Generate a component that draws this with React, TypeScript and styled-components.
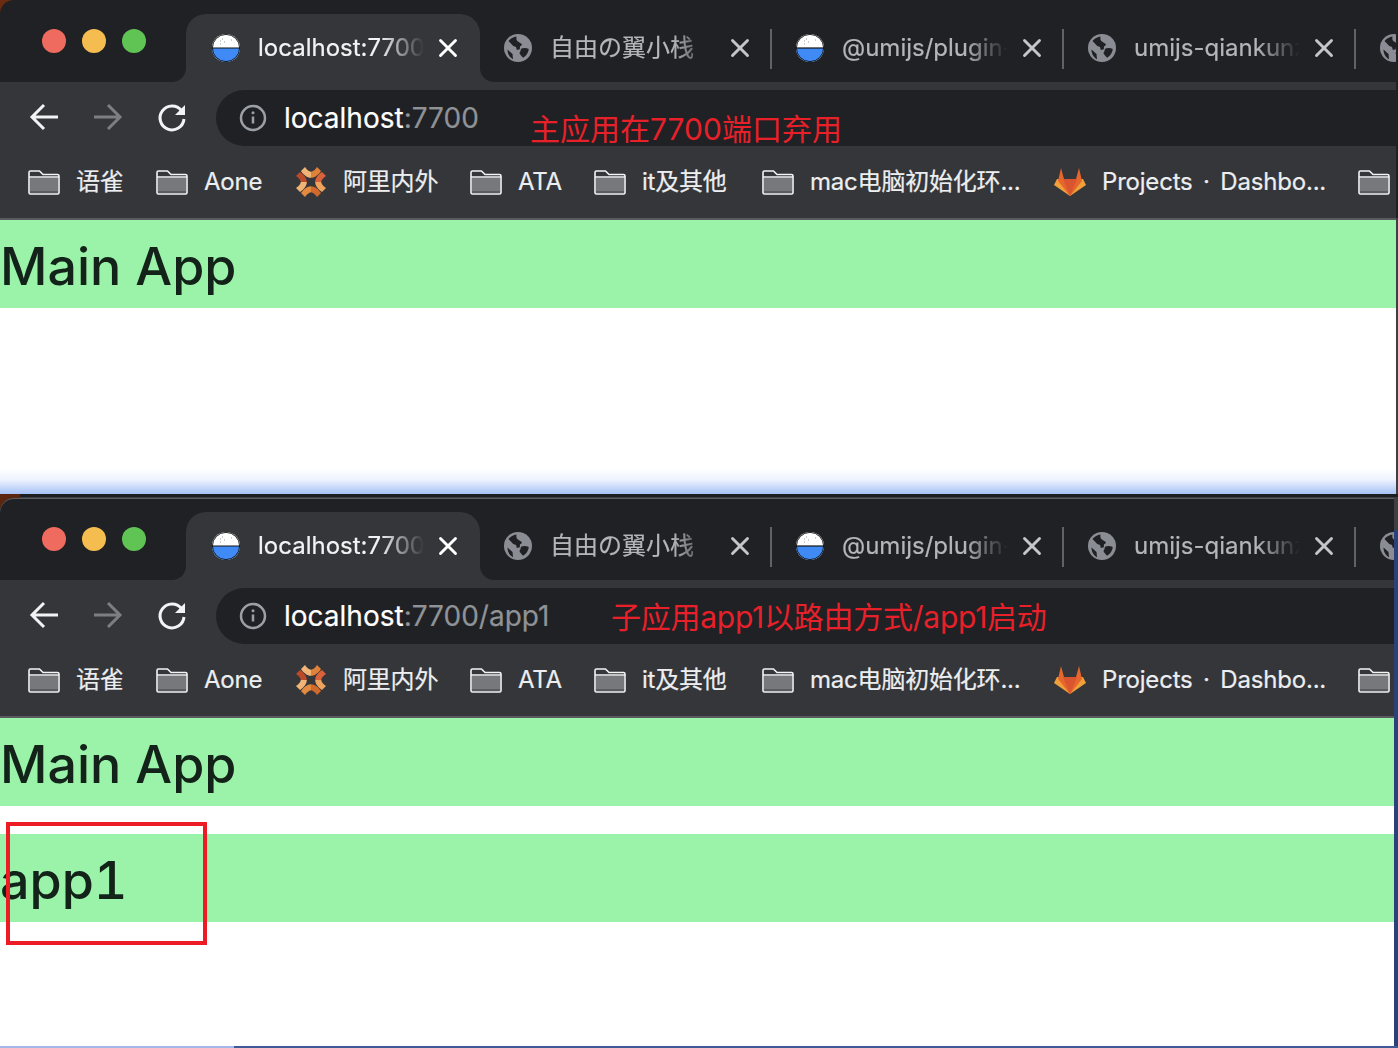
import React from "react";
import styled, { createGlobalStyle } from "styled-components";
import { X } from "lucide-react";

const GlobalStyle = createGlobalStyle`
  html, body {
    margin: 0;
    padding: 0;
    background: #ffffff;
    overflow: hidden;
  }
  * {
    box-sizing: border-box;
  }
  body {
    font-family: Inter, "Noto Sans CJK SC", sans-serif;
  }
`;

const Page = styled.div`
  width: 1398px;
  height: 1048px;
  display: flex;
  flex-direction: column;
  overflow: hidden;
  background: #ffffff;
`;

const Frame = styled.section<{ $height: number; $top: number; $backdrop: string; $edge: number }>`
  height: ${(p) => p.$height}px;
  flex: none;
  display: flex;
  flex-direction: column;
  padding-right: ${(p) => p.$edge}px;
  background: ${(p) => p.$backdrop};
  padding-top: ${(p) => p.$top}px;
`;

const Chrome = styled.div<{ $lined: boolean }>`
  flex: none;
  background: #202124;
  border-top-left-radius: 14px;
  overflow: hidden;
  ${(p) => (p.$lined ? "box-shadow: inset 0 1px 0 #5c5d60;" : "")}
`;

const TabStrip = styled.div`
  height: 82px;
  display: flex;
  align-items: flex-end;
  overflow: hidden;
`;

const Lights = styled.div`
  flex: none;
  width: 186px;
  height: 82px;
  display: flex;
  gap: 16px;
  padding: 29px 0 0 42px;
`;

const Light = styled.span<{ $color: string }>`
  width: 24px;
  height: 24px;
  border-radius: 50%;
  background: ${(p) => p.$color};
`;

const Tab = styled.div<{ $active?: boolean; $width: number }>`
  position: relative;
  flex: none;
  width: ${(p) => p.$width}px;
  height: 68px;
  display: flex;
  align-items: center;
  padding: 0 20px 0 ${(p) => (p.$active ? 26 : 24)}px;
  color: ${(p) => (p.$active ? "#f1f3f4" : "#b4b6b9")};
  background: ${(p) => (p.$active ? "#35363a" : "transparent")};
  border-radius: 20px 20px 0 0;

  ${(p) =>
    p.$active
      ? `
    &::before, &::after {
      content: "";
      position: absolute;
      bottom: 0;
      width: 14px;
      height: 14px;
    }
    &::before {
      left: -14px;
      background: radial-gradient(circle at 0 0, #202124 13.5px, #35363a 14.5px);
    }
    &::after {
      right: -14px;
      background: radial-gradient(circle at 100% 0, #202124 13.5px, #35363a 14.5px);
    }
  `
      : ""}
`;

const TabDivider = styled.span`
  position: absolute;
  right: 0;
  top: 15px;
  width: 2px;
  height: 40px;
  background: #5f6368;
`;

const TabTitle = styled.span`
  flex: 1;
  min-width: 0;
  margin: 0 12px 0 18px;
  font-size: 24px;
  line-height: 32px;
  white-space: nowrap;
  overflow: hidden;
  -webkit-text-stroke: 0.2px currentColor;
  -webkit-mask-image: linear-gradient(to right, #000 74%, transparent 100%);
  mask-image: linear-gradient(to right, #000 74%, transparent 100%);
`;

const TabClose = styled.span`
  flex: none;
  width: 24px;
  height: 24px;
  display: flex;
  align-items: center;
  justify-content: center;
  & svg {
    flex: none;
  }
`;

const Toolbar = styled.div`
  height: 64px;
  display: flex;
  align-items: flex-end;
  background: #35363a;
`;

const NavGroup = styled.div`
  flex: none;
  width: 216px;
  height: 64px;
  display: flex;
  align-items: center;
  padding: 6px 0 0 28px;
  gap: 32px;
`;

const Omnibox = styled.div`
  position: relative;
  flex: 1;
  height: 56px;
  display: flex;
  align-items: center;
  padding-left: 23px;
  background: #202124;
  border-radius: 28px 0 0 28px;
`;

const UrlText = styled.span`
  margin-left: 17px;
  font-size: 28px;
  line-height: 36px;
  color: #ffffff;
  white-space: nowrap;
  -webkit-text-stroke: 0.2px currentColor;
`;

const UrlRest = styled.span`
  color: #8f9296;
`;

const Note = styled.span<{ $left: number; $top: number; $tight?: boolean }>`
  position: absolute;
  left: ${(p) => p.$left}px;
  top: ${(p) => p.$top}px;
  font-size: 30px;
  line-height: 40px;
  color: #e8202a;
  white-space: nowrap;
  letter-spacing: ${(p) => (p.$tight ? "-0.25px" : "0")};
`;

const Bookmarks = styled.div`
  height: 72px;
  display: flex;
  align-items: center;
  padding: 0 0 0 28px;
  background: #35363a;
  overflow: hidden;
`;

const Bookmark = styled.div<{ $width: number }>`
  flex: none;
  display: flex;
  align-items: center;
  gap: 16px;
  width: ${(p) => p.$width}px;
  color: #eceef0;
  font-size: 24px;
  line-height: 32px;
  letter-spacing: -0.2px;
  word-spacing: 4px;
  white-space: nowrap;
  -webkit-text-stroke: 0.2px currentColor;
`;

const Rule = styled.div`
  height: 2px;
  background: #5a5b5f;
`;

const Content = styled.main<{ $gap: number }>`
  position: relative;
  flex: 1;
  min-height: 0;
  display: flex;
  flex-direction: column;
  gap: ${(p) => p.$gap}px;
  background: #ffffff;
`;

const Banner = styled.div`
  height: 88px;
  flex: none;
  padding-top: 3px;
  background: #9bf2a9;
  color: #13231a;
  font-size: 52px;
  line-height: 88px;
  font-weight: 500;
  font-feature-settings: "tnum";
`;

const Glow = styled.div`
  margin-top: auto;
  height: 26px;
  flex: none;
  background: linear-gradient(to bottom, #ffffff, #eef3fe 45%, #a6c1f6 100%);
`;

const RedBox = styled.div`
  position: absolute;
  left: 6px;
  top: 104px;
  width: 201px;
  height: 123px;
  border: 4px solid #ed1c24;
`;

const DeskStrip = styled.div`
  height: 2px;
  flex: none;
  background: linear-gradient(to right, #a5b9e8 0, #a5b9e8 234px, #3f5a94 234px);
`;

const Rice = () => (
  <svg width="28" height="30" viewBox="0 0 28 30" style={{ flex: "none" }}>
    <circle cx="14" cy="15" r="14" fill="#ffffff" />
    <path d="M0 15h28a14 14 0 0 1-28 0z" fill="#3f8af5" />
    <path d="M0 15h28" stroke="#111" strokeWidth="1.2" />
    <circle cx="14" cy="15" r="13.6" fill="none" stroke="#111" strokeWidth="0.9" />
    <path d="M8 8h1M10 6h1M8 11h1M19 7h1M12 9h1" stroke="#9a9a9a" strokeWidth="1" />
  </svg>
);

const Globe = () => (
  <svg width="28" height="28" viewBox="0 0 28 28" style={{ flex: "none" }}>
    <circle cx="14" cy="14" r="14" fill="#8a8e94" />
    <path
      d="M12.5 2.5c-3 .4-6 2-8 4.6l4.5 4.6c1 .8 2.6 .6 3.2 1.8l.6 2.5 3-.8.2-3c1.2-.2 2-1 1.800-2.200L14 7.500c-1.500-.4-2-3-1.500-5z"
      fill="#202124"
    />
    <path
      d="M17.5 14.5c1.6-.6 5-.8 7.3 .4-.4 3.800-2.700 7-5.800 8.800l-3-3.400c-.8-1-.3-2 .4-3 .4-1.200 .2-2.200 1.100-2.800z"
      fill="#202124"
    />
    <path d="M3.5 15.500l5 4.500 .5 5.200c-3.500-1.700-5.500-5.600-5.500-9.700z" fill="#202124" />
  </svg>
);

const Folder = () => (
  <svg width="32" height="25" viewBox="0 0 32 25" style={{ flex: "none" }}>
    <path d="M2 8h28v14H2z" fill="#77787b" />
    <path d="M2 21h28v2H2z" fill="#5b5c5f" />
    <path
      d="M1 2.500c0-.8.700-1.500 1.500-1.500h9l3.500 3.500h14.500c.800 0 1.500 .700 1.500 1.500v16.500c0 .800-.700 1.500-1.500 1.500h-27c-.800 0-1.500-.700-1.500-1.500zM1 7h30"
      fill="none"
      stroke="#f4f4f5"
      strokeWidth="1.600"
      strokeLinejoin="round"
    />
  </svg>
);

const AoneLogo = () => (
  <svg width="32" height="32" viewBox="0 0 32 32" style={{ flex: "none" }}>
    <path d="M6 5l4-4c2 3 4 4.500 6 4.800v6c-4 0-7.500-3-10-6.800z" fill="#f1b477" />
    <path d="M26 5l-4-4c-2 3-4 4.500-6 4.800v6c4 0 7.500-3 10-6.800z" fill="#e0813a" />
    <path d="M27 6l4 4c-3 2-4.500 4-4.800 6h-6c0-4 3-7.500 6.800-10z" fill="#d9623a" />
    <path d="M27 26l4-4c-3-2-4.500-4-4.800-6h-6c0 4 3 7.500 6.800 10z" fill="#eda25e" />
    <path d="M26 27l-4 4c-2-3-4-4.500-6-4.800v-6c4 0 7.500 3 10 6.800z" fill="#cf6a2c" />
    <path d="M6 27l4 4c2-3 4-4.500 6-4.800v-6c-4 0-7.500 3-10 6.800z" fill="#e38a3e" />
    <path d="M5 26l-4-4c3-2 4.500-4 4.800-6h6c0 4-3 7.500-6.800 10z" fill="#f1b477" />
    <path d="M5 6L1 10c3 2 4.500 4 4.800 6h6c0-4-3-7.500-6.800-10z" fill="#b94a2a" />
  </svg>
);

const GitlabLogo = () => (
  <svg width="32" height="32" viewBox="0 0 32 32" style={{ flex: "none" }}>
    <path d="M16 30L0 19l3-6h26l3 6z" fill="#f0a03a" />
    <path d="M16 30L4 15 7 2l3 11h12l3-11 3 13z" fill="#e6662c" />
    <path d="M16 30L9 13h14z" fill="#d95530" />
  </svg>
);

const Arrow = ({ dir, color }: { dir: "left" | "right"; color: string }) => (
  <svg
    width="32"
    height="32"
    viewBox="0 0 32 32"
    fill="none"
    stroke={color}
    strokeWidth="3"
    style={{ flex: "none", transform: dir === "right" ? "scaleX(-1)" : undefined }}
  >
    <path d="M30 16H5M16 4L4 16l12 12" />
  </svg>
);

const Reload = () => (
  <svg width="32" height="32" viewBox="0 0 32 32" fill="none" style={{ flex: "none" }}>
    <path d="M25.5 9.5A12 12 0 1 0 28 18" stroke="#f1f3f4" strokeWidth="3" />
    <path d="M29 4v10H19z" fill="#f1f3f4" />
  </svg>
);

const InfoIcon = () => (
  <svg width="28" height="28" viewBox="0 0 28 28" fill="none" style={{ flex: "none" }}>
    <circle cx="14" cy="14" r="12" stroke="#9aa0a6" strokeWidth="2.5" />
    <path d="M14 12.5v7" stroke="#9aa0a6" strokeWidth="2.5" />
    <circle cx="14" cy="8.8" r="1.5" fill="#9aa0a6" />
  </svg>
);

const tabs = [
  { title: "自由の翼小栈", icon: "globe", width: 292 },
  { title: "@umijs/plugin-qiankun", icon: "rice", width: 292 },
  { title: "umijs-qiankun示例", icon: "globe", width: 292 },
  { title: "", icon: "globe", width: 292 },
];

const marks = [
  { label: "语雀", icon: "folder", width: 128 },
  { label: "Aone", icon: "folder", width: 139 },
  { label: "阿里内外", icon: "aone", width: 175 },
  { label: "ATA", icon: "folder", width: 124 },
  { label: "it及其他", icon: "folder", width: 168 },
  { label: "mac电脑初始化环...", icon: "folder", width: 292 },
  { label: "Projects · Dashbo...", icon: "gitlab", width: 304 },
  { label: "", icon: "folder", width: 60 },
];

const markIcon = (icon: string) => {
  if (icon === "aone") return <AoneLogo />;
  if (icon === "gitlab") return <GitlabLogo />;
  return <Folder />;
};

interface WindowProps {
  height: number;
  top: number;
  backdrop: string;
  edge: number;
  path?: string;
  note: React.ReactNode;
  children: React.ReactNode;
  gap: number;
}

function BrowserWindow({ height, top, backdrop, edge, path, note, children, gap }: WindowProps) {
  return (
    <Frame $height={height} $top={top} $backdrop={backdrop} $edge={edge}>
      <Chrome $lined={top > 0}>
        <TabStrip>
          <Lights>
            <Light $color="#ef6b5f" />
            <Light $color="#f5bd4f" />
            <Light $color="#5fc454" />
          </Lights>
          <Tab $active $width={294}>
            <Rice />
            <TabTitle>localhost:7700</TabTitle>
            <TabClose>
              <X size={30} color="#ffffff" strokeWidth={2.3} />
            </TabClose>
          </Tab>
          {tabs.map((t, i) => (
            <Tab key={i} $width={t.width}>
              {t.icon === "rice" ? <Rice /> : <Globe />}
              <TabTitle>{t.title}</TabTitle>
              <TabClose>
                <X size={30} color="#c4c6c9" strokeWidth={2.3} />
              </TabClose>
              <TabDivider />
            </Tab>
          ))}
        </TabStrip>
        <Toolbar>
          <NavGroup>
            <Arrow dir="left" color="#f1f3f4" />
            <Arrow dir="right" color="#7c7e82" />
            <Reload />
          </NavGroup>
          <Omnibox>
            <InfoIcon />
            <UrlText>
              localhost<UrlRest>:7700{path}</UrlRest>
            </UrlText>
            {note}
          </Omnibox>
        </Toolbar>
        <Bookmarks>
          {marks.map((m, i) => (
            <Bookmark key={i} $width={m.width}>
              {markIcon(m.icon)}
              {m.label && <span>{m.label}</span>}
            </Bookmark>
          ))}
        </Bookmarks>
        <Rule />
      </Chrome>
      <Content $gap={gap}>{children}</Content>
    </Frame>
  );
}

export default function App() {
  return (
    <Page>
      <GlobalStyle />
      <BrowserWindow
        height={494}
        top={0}
        edge={2}
        backdrop="linear-gradient(#6b2b10, #6b2b10) 0 0 / 20px 14px no-repeat, linear-gradient(#202124 0, #202124 218px, #3e3f43 218px)"
        gap={0}
        note={
          <Note $left={314} $top={19}>
            主应用在7700端口弃用
          </Note>
        }
      >
        <Banner>Main App</Banner>
        <Glow />
      </BrowserWindow>
      <BrowserWindow
        height={552}
        top={4}
        edge={4}
        backdrop="linear-gradient(#5c2510, #5c2510) 0 0 / 20px 14px no-repeat, linear-gradient(#1d1e20 0, #1d1e20 3px, #3e3f43 3px, #3e3f43 36px, #2a4278 36px)"
        gap={28}
        path="/app1"
        note={
          <Note $left={395} $top={9} $tight>
            子应用app1以路由方式/app1启动
          </Note>
        }
      >
        <Banner>Main App</Banner>
        <Banner>app1</Banner>
        <RedBox />
      </BrowserWindow>
      <DeskStrip />
    </Page>
  );
}
